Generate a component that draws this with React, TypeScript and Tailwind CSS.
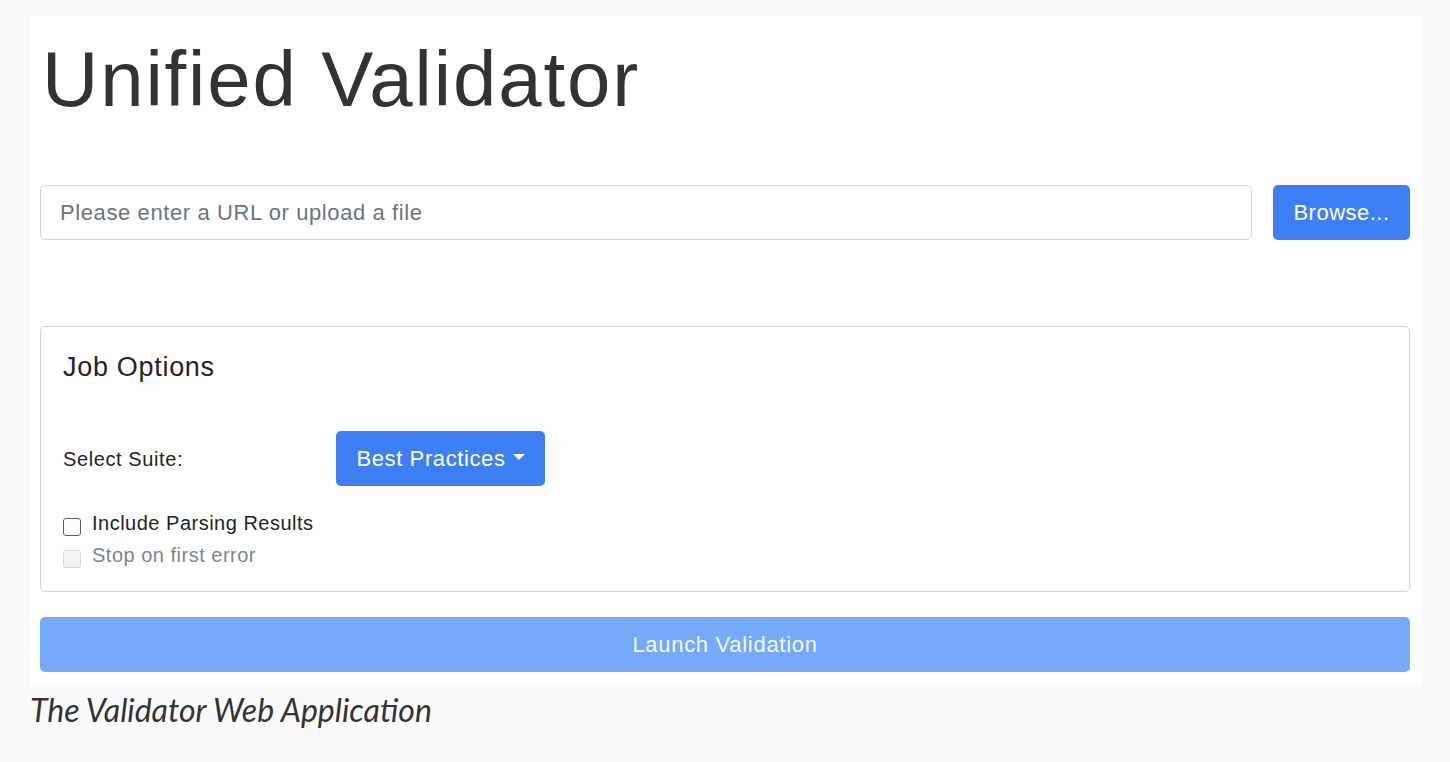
import React from 'react'

const sans = { fontFamily: '"Liberation Sans", Arial, sans-serif' }

function Checkbox({ label, disabled }: { label: string; disabled?: boolean }) {
  return (
    <label className={`flex items-start gap-[11px] h-[32px] ${disabled ? 'text-[#7d848b]' : 'text-[#212529]'}`}>
      <span
        className={`shrink-0 w-[18px] h-[18px] rounded-[3px] border mt-[11px] ${
          disabled ? 'border-[#d9d9d9] bg-[#f4f4f4]' : 'border-[#5c5c5c] bg-white'
        }`}
      />
      <span className="text-[20px] leading-[32px] tracking-[0.5px]">{label}</span>
    </label>
  )
}

export default function App() {
  return (
    <div className="min-h-screen bg-[#fafafa] pt-[16px] pl-[30px]">
      <div className="w-[1392px] bg-white pl-[10px] pr-[12px] pb-[14px]" style={sans}>
        <h1 className="pt-[24px] pl-[2px] text-[78px] leading-none tracking-[1.85px] text-[#333333]">Unified Validator</h1>

        {/* URL input */}
        <div className="mt-[67px] flex gap-[21px]">
          <div className="flex-1 h-[55px] rounded-[5px] border border-[#ced4da] flex items-center pl-[19px] text-[22px] tracking-[0.6px] text-[#6c757d]">
            Please enter a URL or upload a file
          </div>
          <button className="w-[137px] h-[55px] rounded-[5px] bg-[#3f7ff6] text-white text-[22px] tracking-[0.5px]">Browse...</button>
        </div>

        {/* Job options */}
        <div className="mt-[86px] rounded-[5px] border border-[#d3d3d3] px-[22px] pt-[24px] pb-[20px]">
          <h5 className="text-[27px] leading-[1.2] tracking-[0.7px] text-[#212529]">Job Options</h5>
          <div className="mt-[48px] flex items-center">
            <span className="w-[273px] text-[20px] tracking-[0.6px] text-[#212529]">Select Suite:</span>
            <button className="w-[209px] h-[55px] rounded-[5px] bg-[#3f7ff6] text-white text-[22px] tracking-[0.6px] flex items-center justify-center gap-[7px]">
              Best Practices
              <span className="inline-block w-0 h-0 border-x-[6px] border-x-transparent border-t-[6px] border-t-white mb-[3px]" />
            </button>
          </div>
          <div className="mt-[21px] flex flex-col">
            <Checkbox label="Include Parsing Results" />
            <Checkbox label="Stop on first error" disabled />
          </div>
        </div>

        <button className="mt-[25px] w-full h-[55px] rounded-[5px] bg-[#75a9f9] text-[#f4f8ff] text-[22px] tracking-[0.7px]">
          Launch Validation
        </button>
      </div>
      <p className="mt-[5px] text-[32px] leading-[1.2] italic text-[#333333]" style={{ fontFamily: 'Lato, sans-serif' }}>
        The Validator Web Application
      </p>
    </div>
  )
}
